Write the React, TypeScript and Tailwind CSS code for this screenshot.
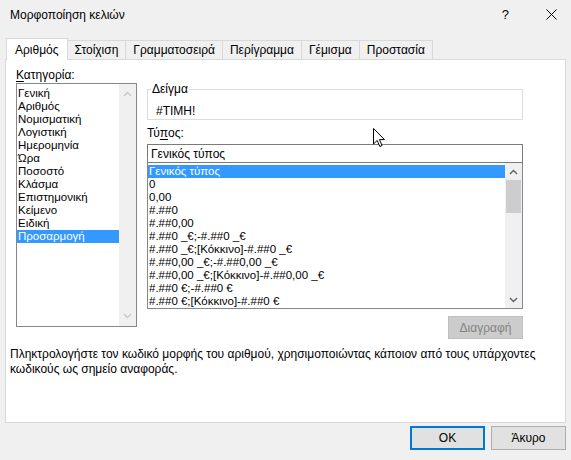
import React from "react";

const tabs = ["Αριθμός", "Στοίχιση", "Γραμματοσειρά", "Περίγραμμα", "Γέμισμα", "Προστασία"];

const categories = [
    "Γενική",
    "Αριθμός",
    "Νομισματική",
    "Λογιστική",
    "Ημερομηνία",
    "Ώρα",
    "Ποσοστό",
    "Κλάσμα",
    "Επιστημονική",
    "Κείμενο",
    "Ειδική",
    "Προσαρμογή",
];

const formats = [
    "Γενικός τύπος",
    "0",
    "0,00",
    "#.##0",
    "#.##0,00",
    "#.##0 _€;-#.##0 _€",
    "#.##0 _€;[Κόκκινο]-#.##0 _€",
    "#.##0,00 _€;-#.##0,00 _€",
    "#.##0,00 _€;[Κόκκινο]-#.##0,00 _€",
    "#.##0 €;-#.##0 €",
    "#.##0 €;[Κόκκινο]-#.##0 €",
];

function Chevron({ up, className }: { up?: boolean; className: string }) {
    return (
        <svg width="9" height="6" viewBox="0 0 9 6" className={className}>
            <path
                d={up ? "M1 5 L4.5 1.5 L8 5" : "M1 1 L4.5 4.5 L8 1"}
                fill="none"
                stroke="currentColor"
                strokeWidth="1.4"
            />
        </svg>
    );
}

export default function App() {
    return (
        <div className="relative w-[571px] h-[460px] overflow-hidden bg-[#f0f0f0] font-['Liberation_Sans',Arial,sans-serif] text-[12px] text-black">
            {/* Title bar */}
            <div className="flex h-[29px] items-center pl-[10px]">
                <span>Μορφοποίηση κελιών</span>
                <span className="ml-auto mr-[37px] text-[13px]">?</span>
                <svg width="11" height="11" viewBox="0 0 11 11" className="mr-[14px]">
                    <path d="M0.5 0.5 L10.5 10.5 M10.5 0.5 L0.5 10.5" stroke="#000" strokeWidth="1" />
                </svg>
            </div>

            {/* Tabs */}
            <div className="relative z-10 mt-[9px] flex h-[21px] items-end pl-[6px]">
                {tabs.map((t, i) =>
                    i === 0 ? (
                        <div
                            key={t}
                            className="-mb-px flex h-[22px] items-center border border-b-0 border-[#d9d9d9] bg-white px-[8px] leading-[16px]"
                        >
                            {t}
                        </div>
                    ) : (
                        <div
                            key={t}
                            className="-ml-px flex h-[19px] items-center border border-b-0 border-[#d9d9d9] bg-[#f0f0f0] px-[7px] leading-[16px]"
                        >
                            {t}
                        </div>
                    )
                )}
            </div>

            {/* Panel */}
            <div className="mx-[5px] flex h-[364px] flex-col border border-[#d9d9d9] bg-white">
                <div className="flex items-start">
                    {/* Category */}
                    <div className="pl-[10px] pt-[7px]">
                        <div className="leading-[16px]">
                            <span className="underline underline-offset-2">Κ</span>ατηγορία:
                        </div>
                        <div className="flex h-[244px] w-[121px] border border-[#828790] bg-white">
                            <div className="flex-1 pt-[3px] text-[11.5px]">
                                {categories.map((c, i) => (
                                    <div
                                        key={c}
                                        className={
                                            i === categories.length - 1
                                                ? "h-[13px] bg-[#3399ff] pl-[1px] leading-[13px] text-white"
                                                : "h-[13px] pl-[1px] leading-[13px]"
                                        }
                                    >
                                        {c}
                                    </div>
                                ))}
                            </div>
                            <div className="flex w-[17px] flex-col items-center justify-between bg-[#f0f0f0] py-[7px]">
                                <Chevron up className="text-[#c8c8c8]" />
                                <Chevron className="text-[#c8c8c8]" />
                            </div>
                        </div>
                    </div>

                    {/* Right column */}
                    <div className="ml-[10px] flex w-[376px] flex-col pt-[21px]">
                        <fieldset className="border border-[#dcdcdc] px-[8px] pb-0 pt-[6px]">
                            <legend className="ml-[-5px] px-[1px] leading-[16px]">Δείγμα</legend>
                            <div className="leading-[16px]">#ΤΙΜΗ!</div>
                        </fieldset>

                        <div className="mt-[5px] leading-[16px]">
                            Τύ<span className="underline underline-offset-2">π</span>ος:
                        </div>
                        <div className="mt-[3px] flex h-[19px] items-center border border-[#7a7a7a] pl-[3px]">
                            Γενικός τύπος
                        </div>

                        <div className="flex h-[146px] border border-t-0 border-[#828790] bg-white">
                            <div className="flex-1 pt-[2px] text-[11.5px]">
                                {formats.map((f, i) => (
                                    <div
                                        key={f}
                                        className={
                                            i === 0
                                                ? "h-[13px] whitespace-nowrap bg-[#3399ff] pl-[1px] leading-[13px] text-white"
                                                : "h-[13px] whitespace-nowrap pl-[1px] leading-[13px]"
                                        }
                                    >
                                        {f}
                                    </div>
                                ))}
                            </div>
                            <div className="flex w-[17px] flex-col bg-[#f0f0f0]">
                                <div className="flex h-[17px] items-center justify-center">
                                    <Chevron up className="text-[#606060]" />
                                </div>
                                <div className="mx-px h-[33px] bg-[#cdcdcd]" />
                                <div className="mt-auto flex h-[17px] items-center justify-center">
                                    <Chevron className="text-[#606060]" />
                                </div>
                            </div>
                        </div>

                        <div className="mt-[7px] flex justify-end">
                            <div className="flex h-[23px] w-[75px] items-center justify-center border border-[#bfbfbf] bg-[#cccccc] text-[#838383]">
                                Διαγραφή
                            </div>
                        </div>
                    </div>
                </div>

                <div className="mt-[8px] whitespace-nowrap pl-[4px] leading-[15px]">
                    Πληκτρολογήστε τον κωδικό μορφής του αριθμού, χρησιμοποιώντας κάποιον από τους υπάρχοντες
                    <br />
                    κωδικούς ως σημείο αναφοράς.
                </div>
            </div>

            {/* Buttons */}
            <div className="mt-[3px] flex justify-end gap-[6px] pr-[5px]">
                <div className="flex h-[24px] w-[75px] items-center justify-center border-2 border-[#0078d7] bg-[#e1e1e1]">
                    OK
                </div>
                <div className="flex h-[24px] w-[75px] items-center justify-center border border-[#adadad] bg-[#e1e1e1]">
                    Άκυρο
                </div>
            </div>

            {/* Mouse pointer */}
            <svg
                width="13"
                height="20"
                viewBox="0 0 13 20"
                className="absolute left-[373px] top-[128px]"
            >
                <path
                    d="M0.5 0.5 L0.5 16 L4.2 12.4 L6.8 18.5 L9 17.6 L6.5 11.6 L11.5 11.6 Z"
                    fill="#fff"
                    stroke="#000"
                    strokeWidth="1"
                    strokeLinejoin="miter"
                />
            </svg>
        </div>
    );
}
